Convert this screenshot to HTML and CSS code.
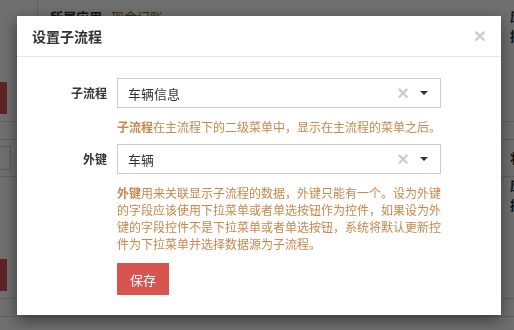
FILE: index.html
```html
<!DOCTYPE html>
<html lang="zh-CN">
<head>
    <meta charset="UTF-8">
    <meta name="viewport" content="width=device-width, initial-scale=1.0">
    <title>设置子流程</title>
    <link rel="stylesheet" href="styles.css">
</head>
<body>
    <!-- page under the dialog -->
    <div class="page">
        <div class="page-row head">
            <div class="page-head">
                <span class="page-label">所属应用</span>
                <span class="page-app">现金记账</span>
            </div>
            <div class="page-side">
                <span class="side-text">应</span>
                <span class="side-text">操</span>
            </div>
        </div>
        <div class="page-row">
            <div class="page-btn"></div>
        </div>
        <div class="page-line"></div>
        <div class="page-row thin"></div>
        <div class="page-line"></div>
        <div class="page-row small">
            <div class="page-select"></div>
            <span class="side-text">状</span>
        </div>
        <div class="page-line"></div>
        <div class="page-row tall">
            <div class="page-btn low"></div>
            <div class="page-side">
                <span class="side-text">应</span>
                <span class="side-text">操</span>
            </div>
        </div>
        <div class="page-line"></div>
        <div class="page-row thin"></div>
        <div class="page-line"></div>
    </div>

    <div class="backdrop"></div>

    <div class="modal">
        <div class="modal-header">
            <h4 class="modal-title">设置子流程</h4>
            <span class="close">&times;</span>
        </div>
        <div class="modal-body">
            <div class="form-row">
                <label class="form-label">子流程</label>
                <div class="form-control">
                    <div class="select">
                        <span class="select-value">车辆信息</span>
                        <span class="select-clear">&times;</span>
                        <span class="select-caret"></span>
                    </div>
                    <p class="help"><b>子流程</b>在主流程下的二级菜单中，显示在主流程的菜单之后。</p>
                </div>
            </div>
            <div class="form-row">
                <label class="form-label">外键</label>
                <div class="form-control">
                    <div class="select">
                        <span class="select-value">车辆</span>
                        <span class="select-clear">&times;</span>
                        <span class="select-caret"></span>
                    </div>
                    <p class="help"><b>外键</b>用来关联显示子流程的数据，外键只能有一个。设为外键的字段应该使用下拉菜单或者单选按钮作为控件，如果设为外键的字段控件不是下拉菜单或者单选按钮，系统将默认更新控件为下拉菜单并选择数据源为子流程。</p>
                </div>
            </div>
            <div class="form-row">
                <div class="form-label"></div>
                <div class="form-control">
                    <button class="button danger">保存</button>
                </div>
            </div>
        </div>
    </div>
</body>
</html>
```

FILE: styles.css
```css
body {
    margin: 0;
    font-family: "Noto Sans CJK SC", "Liberation Sans", sans-serif;
    background-color: #fff;
    overflow: hidden;
    height: 330px;
}
.page-row {
    display: flex;
    justify-content: space-between;
    align-items: flex-start;
    height: 92px;
}
.page-row.head {
    height: 29px;
}
.page-row.thin {
    height: 17px;
}
.page-row.small {
    height: 36px;
    align-items: center;
}
.page-row.tall {
    height: 121px;
}
.page-head {
    height: 22px;
    margin-left: 37px;
    padding: 7px 0 0 12px;
    border-left: 1px solid #ddd;
    font-size: 13px;
    line-height: 20px;
}
.page-label {
    font-weight: bold;
    color: #333;
}
.page-app {
    color: #8a5a2b;
    margin-left: 6px;
}
.page-btn {
    width: 7px;
    height: 32px;
    margin-top: 53px;
    background-color: #d9534f;
}
.page-btn.low {
    margin-top: 82px;
}
.page-side {
    display: flex;
    flex-direction: column;
    gap: 4px;
    padding-top: 8px;
}
.tall .page-side {
    padding-top: 0;
}
.side-text {
    font-size: 13px;
    line-height: 16px;
    color: #333;
    font-weight: bold;
    width: 4px;
    overflow: hidden;
}
.page-select {
    width: 10px;
    height: 22px;
    border: 1px solid #ccc;
    border-left: none;
}
.page-line {
    height: 1px;
    background-color: #ddd;
}
.backdrop {
    position: fixed;
    top: 0;
    left: 0;
    right: 0;
    bottom: 0;
    background-color: rgba(0, 0, 0, 0.56);
}
.modal {
    position: absolute;
    top: 16px;
    left: 17px;
    width: 484px;
    background: white;
    box-shadow: 0 5px 15px rgba(0, 0, 0, 0.5);
}
.modal-header {
    display: flex;
    justify-content: space-between;
    align-items: center;
    padding: 10px 15px;
    border-bottom: 1px solid #e5e5e5;
}
.modal-title {
    margin: 0;
    font-size: 14px;
    line-height: 20px;
    font-weight: bold;
    color: #333;
}
.close {
    font-family: "Liberation Sans", sans-serif;
    font-size: 21px;
    line-height: 20px;
    font-weight: bold;
    color: #ccc;
}
.modal-body {
    padding: 21px 15px 20px;
}
.form-row {
    display: flex;
    gap: 10px;
    margin-bottom: 9px;
}
.form-row:last-child {
    margin-bottom: 0;
}
.form-label {
    width: 75px;
    flex: none;
    text-align: right;
    font-size: 12px;
    font-weight: bold;
    color: #333;
    line-height: 30px;
}
.form-control {
    width: 324px;
}
.select {
    display: flex;
    align-items: center;
    height: 28px;
    border: 1px solid #ccc;
    padding: 0 12px 0 10px;
    font-size: 13px;
    color: #333;
}
.select-value {
    flex: 1;
}
.select-clear {
    font-family: "Liberation Sans", sans-serif;
    font-size: 20px;
    font-weight: bold;
    color: #ccc;
    margin-right: 11px;
}
.select-caret {
    width: 0;
    height: 0;
    border-left: 4px solid transparent;
    border-right: 4px solid transparent;
    border-top: 4px solid #333;
}
.help {
    margin: 10px -4px 0 0;
    font-size: 12px;
    line-height: 17px;
    color: #c8874c;
}
.help b {
    font-weight: bold;
}
.button {
    margin-top: 2px;
    height: 32px;
    padding: 0 13px;
    border: none;
    font-family: inherit;
    font-size: 13px;
    color: white;
    cursor: pointer;
}
.button.danger {
    background-color: #d9534f;
}
```
